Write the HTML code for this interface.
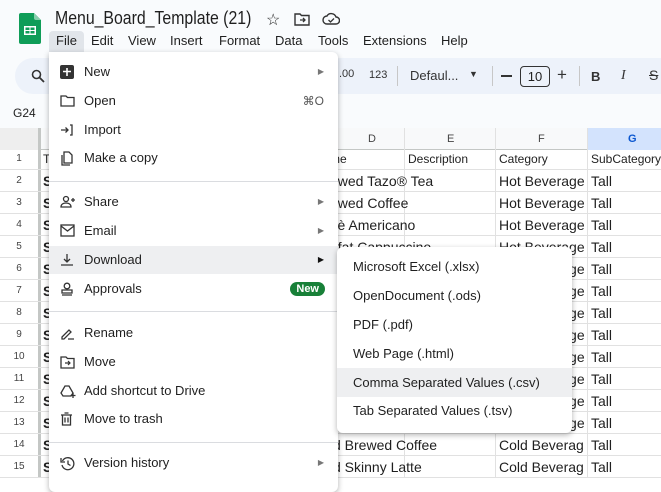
<!DOCTYPE html>
<html><head><meta charset="utf-8"><style>
*{margin:0;padding:0;box-sizing:border-box}
body{width:661px;height:478px;overflow:hidden;background:#fff;font-family:"Liberation Sans",Arial,sans-serif;color:#1f1f1f;position:relative}
.a{position:absolute;white-space:nowrap}
.top{position:absolute;left:0;top:0;width:661px;height:128px;background:#f9fbfd}
.grid div{position:absolute}
.mi{position:absolute;left:0;width:289px;height:28px;font-size:13px;line-height:28px;padding-left:35px;color:#1f1f1f}
.mi svg{position:absolute;left:11px;top:7px}
.arr{position:absolute;right:14px;top:0;font-size:8px;color:#777}
.sep{position:absolute;left:0;width:289px;height:1px;background:#dadce0}
.si{position:absolute;left:0;width:235px;height:29px;font-size:13px;line-height:29px;padding-left:16px;color:#1f1f1f}
</style></head><body>
<div class="top"></div>
<svg class="a" style="left:19px;top:13px" width="22" height="31" viewBox="0 0 22 31"><path d="M2 0h13l7 7v22a2 2 0 0 1-2 2H2a2 2 0 0 1-2-2V2a2 2 0 0 1 2-2z" fill="#0f9d58"/><path d="M15 0l7 7h-5a2 2 0 0 1-2-2z" fill="#87ceac"/><rect x="5" y="13" width="12" height="9" fill="#fff"/><rect x="6.5" y="14.5" width="4" height="2.5" fill="#0f9d58"/><rect x="11.5" y="14.5" width="4" height="2.5" fill="#0f9d58"/><rect x="6.5" y="18" width="4" height="2.5" fill="#0f9d58"/><rect x="11.5" y="18" width="4" height="2.5" fill="#0f9d58"/></svg>
<div class="a" style="left:55px;top:8px;font-size:18px;transform:scaleX(0.88);transform-origin:0 0">Menu_Board_Template (21)</div>
<div class="a" style="left:266px;top:10px;font-size:16px">☆</div>
<svg class="a" style="left:294px;top:12px" width="16" height="14" viewBox="0 0 16 14"><path d="M1 2h5l1.5 1.5H15V13H1z" fill="none" stroke="#333" stroke-width="1.4"/><path d="M6 8h5M9 6l2 2-2 2" fill="none" stroke="#333" stroke-width="1.3"/></svg>
<svg class="a" style="left:322px;top:12px" width="18" height="13" viewBox="0 0 18 13"><path d="M5 12a4 4 0 0 1 0-8 5 5 0 0 1 9 1 3.5 3.5 0 0 1 0 7z" fill="none" stroke="#333" stroke-width="1.4"/><path d="M6.5 8l2 2 3.5-3.5" fill="none" stroke="#333" stroke-width="1.3"/></svg>
<div class="a" style="left:49px;top:31px;width:35px;height:21px;background:#e1e5ea;border-radius:4px 4px 0 0"></div>
<div class="a" style="left:56px;top:33px;font-size:13px">File</div>
<div class="a" style="left:91px;top:33px;font-size:13px">Edit</div>
<div class="a" style="left:128px;top:33px;font-size:13px">View</div>
<div class="a" style="left:170px;top:33px;font-size:13px">Insert</div>
<div class="a" style="left:219px;top:33px;font-size:13px">Format</div>
<div class="a" style="left:275px;top:33px;font-size:13px">Data</div>
<div class="a" style="left:318px;top:33px;font-size:13px">Tools</div>
<div class="a" style="left:363px;top:33px;font-size:13px">Extensions</div>
<div class="a" style="left:441px;top:33px;font-size:13px">Help</div>
<div class="a" style="left:15px;top:58px;width:680px;height:36px;background:#edf2fa;border-radius:18px"></div>
<svg class="a" style="left:31px;top:69px" width="14" height="14" viewBox="0 0 14 14"><circle cx="5.5" cy="5.5" r="4" fill="none" stroke="#333" stroke-width="1.6"/><path d="M8.5 8.5L13 13" stroke="#333" stroke-width="1.8"/></svg>
<div class="a" style="left:339px;top:68px;font-size:11px;color:#333">.00</div>
<div class="a" style="left:369px;top:69px;font-size:11px;color:#333">123</div>
<div class="a" style="left:397px;top:66px;width:1px;height:20px;background:#c7c7c7"></div>
<div class="a" style="left:410px;top:68px;font-size:13px;color:#333">Defaul...</div>
<div class="a" style="left:469px;top:69px;font-size:9px;color:#333">▼</div>
<div class="a" style="left:492px;top:66px;width:1px;height:20px;background:#c7c7c7"></div>
<div class="a" style="left:501px;top:75px;width:11px;height:1.5px;background:#333"></div>
<div class="a" style="left:520px;top:66px;width:30px;height:21px;border:1px solid #333;border-radius:4px;font-size:13px;text-align:center;line-height:19px">10</div>
<div class="a" style="left:557px;top:65px;font-size:17px;color:#333">+</div>
<div class="a" style="left:579px;top:66px;width:1px;height:20px;background:#c7c7c7"></div>
<div class="a" style="left:591px;top:69px;font-size:13px;font-weight:bold;color:#333">B</div>
<div class="a" style="left:621px;top:68px;font-size:14px;font-style:italic;font-family:'Liberation Serif',serif;color:#333">I</div>
<div class="a" style="left:649px;top:67px;font-size:14px;color:#333;text-decoration:line-through">S</div>
<div class="a" style="left:13px;top:106px;font-size:12px">G24</div>
<div class="grid">
<div style="left:0;top:128px;width:661px;height:22px;background:#f8f9fa;border-bottom:1px solid #c4c7c5"></div>
<div style="left:0;top:128px;width:38px;height:22px;background:#eee"></div>
<div style="left:587px;top:128px;width:74px;height:22px;background:#d3e3fd"></div>
<div style="left:38px;top:128px;width:3px;height:350px;background:#c4c7c5"></div>
</div>
<div id="g"></div>
<script>
var h='';var ry=148,RH=22;
var cols=[404,495,587];
for(var c of cols)h+='<div class="a" style="left:'+c+'px;top:128px;width:1px;height:350px;background:#e1e1e1"></div>';
h+='<div class="a" style="left:368px;top:133px;font-size:11px;color:#444">D</div>';
h+='<div class="a" style="left:447px;top:133px;font-size:11px;color:#444">E</div>';
h+='<div class="a" style="left:538px;top:133px;font-size:11px;color:#444">F</div>';
h+='<div class="a" style="left:628px;top:133px;font-size:11px;color:#0b57d0;font-weight:bold">G</div>';
var D=['me','ewed Tazo® Tea','ewed Coffee','ffè Americano','nfat Cappuccino','','','','','','','','','d Brewed Coffee','d Skinny Latte'];
for(var i=0;i<15;i++){var y=ry+i*RH;
h+='<div class="a" style="left:0;top:'+(y+RH-1)+'px;width:661px;height:1px;background:#e1e1e1"></div>';
h+='<div class="a" style="left:0;top:'+y+'px;width:38px;text-align:center;font-size:10px;line-height:'+RH+'px;color:#444">'+(i+1)+'</div>';
var big=i>0, fs=big?'14px':'12px';
h+='<div class="a" style="left:43px;top:'+y+'px;font-size:'+fs+';line-height:'+RH+'px;'+(big?'font-weight:bold':'')+'">'+(i==0?'T':'S')+'</div>';
h+='<div class="a" style="left:'+(i>=13?333:330)+'px;top:'+y+'px;font-size:'+fs+';line-height:'+RH+'px">'+D[i]+'</div>';
if(i==0){h+='<div class="a" style="left:408px;top:'+y+'px;font-size:12px;line-height:'+RH+'px">Description</div>';}
var cat=i==0?'Category':(i<13?'Hot Beverage':'Cold Beverag');
h+='<div class="a" style="left:499px;top:'+y+'px;width:87px;overflow:hidden;font-size:'+fs+';line-height:'+RH+'px">'+cat+'</div>';
h+='<div class="a" style="left:591px;top:'+y+'px;font-size:'+fs+';line-height:'+RH+'px">'+(i==0?'SubCategory':'Tall')+'</div>';
}
document.getElementById('g').innerHTML=h;
</script>
<div class="a" style="left:49px;top:52px;width:289px;height:440px;background:#fff;border-radius:0 6px 6px 6px;box-shadow:0 2px 6px rgba(0,0,0,.3)">
<div class="mi" style="top:6px"><svg width="14" height="14" viewBox="0 0 14 14"><rect width="14" height="14" rx="2" fill="#333"/><path d="M7 3v8M3 6.5h8" stroke="#fff" stroke-width="1.6"/></svg>New<span class="arr">▶</span></div>
<div class="mi" style="top:35px"><svg width="15" height="14" viewBox="0 0 15 14"><path d="M1 2h5l1.5 1.5H14V12H1z" fill="none" stroke="#333" stroke-width="1.3"/></svg>Open<span class="arr" style="font-size:12px;color:#555">⌘O</span></div>
<div class="mi" style="top:64px"><svg width="14" height="14" viewBox="0 0 14 14"><path d="M1 7h7M5.5 4.5L8 7l-2.5 2.5M10 2h2v10h-2" fill="none" stroke="#333" stroke-width="1.3"/></svg>Import</div>
<div class="mi" style="top:92px"><svg width="14" height="15" viewBox="0 0 14 15"><path d="M4 1h5l3 3v8H4z M2 4v10h8" fill="none" stroke="#333" stroke-width="1.3"/></svg>Make a copy</div>
<div class="sep" style="top:129px"></div>
<div class="mi" style="top:136px"><svg width="16" height="14" viewBox="0 0 16 14"><circle cx="6" cy="4" r="2.5" fill="none" stroke="#333" stroke-width="1.3"/><path d="M1 12c0-3 2.5-4 5-4s5 1 5 4z M13 3v4M11 5h4" fill="none" stroke="#333" stroke-width="1.3"/></svg>Share<span class="arr">▶</span></div>
<div class="mi" style="top:165px"><svg width="15" height="13" viewBox="0 0 15 13"><rect x="1" y="1" width="13" height="11" fill="none" stroke="#333" stroke-width="1.3"/><path d="M1 2l6.5 5L14 2" fill="none" stroke="#333" stroke-width="1.3"/></svg>Email<span class="arr">▶</span></div>
<div class="mi" style="top:194px;background:#eeeff1"><svg width="14" height="14" viewBox="0 0 14 14"><path d="M7 1v8M4 6l3 3 3-3M1 12h12" fill="none" stroke="#333" stroke-width="1.3"/></svg>Download<span class="arr" style="color:#111">▶</span></div>
<div class="mi" style="top:223px"><svg width="14" height="15" viewBox="0 0 14 15"><circle cx="7" cy="4" r="2.8" fill="none" stroke="#333" stroke-width="1.3"/><path d="M2 8h10v3H2z M2 13h10" fill="none" stroke="#333" stroke-width="1.3"/></svg>Approvals<span style="position:absolute;right:13px;top:7px;background:#188038;color:#fff;font-size:11px;font-weight:bold;line-height:14px;padding:0 6px;border-radius:8px">New</span></div>
<div class="sep" style="top:259px"></div>
<div class="mi" style="top:267px"><svg width="15" height="14" viewBox="0 0 15 14"><path d="M2 11L9 4l2 2-7 7H2zM8 13h6" fill="none" stroke="#333" stroke-width="1.3"/></svg>Rename</div>
<div class="mi" style="top:296px"><svg width="15" height="14" viewBox="0 0 15 14"><path d="M1 2h5l1.5 1.5H14V13H1z" fill="none" stroke="#333" stroke-width="1.3"/><path d="M5 8h5M8 6l2 2-2 2" fill="none" stroke="#333" stroke-width="1.2"/></svg>Move</div>
<div class="mi" style="top:325px"><svg width="16" height="15" viewBox="0 0 16 15"><path d="M5 2h4l4 7-2 3H3L1 9z" fill="none" stroke="#333" stroke-width="1.3"/><path d="M13 9v5M10.5 11.5h5" stroke="#333" stroke-width="1.3"/></svg>Add shortcut to Drive</div>
<div class="mi" style="top:353px"><svg width="13" height="14" viewBox="0 0 13 14"><path d="M1 3h11M4.5 1h4M2.5 3v10h8V3M5 5.5v5M8 5.5v5" fill="none" stroke="#333" stroke-width="1.3"/></svg>Move to trash</div>
<div class="sep" style="top:390px"></div>
<div class="mi" style="top:397px"><svg width="15" height="15" viewBox="0 0 15 15"><path d="M2.5 5A6 6 0 1 1 2 9" fill="none" stroke="#333" stroke-width="1.3"/><path d="M1 2v4h4M8 4.5V8l2.5 1.5" fill="none" stroke="#333" stroke-width="1.3"/></svg>Version history<span class="arr">▶</span></div>
</div>
<div class="a" style="left:337px;top:247px;width:235px;height:186px;background:#fff;border-radius:6px;box-shadow:0 2px 6px rgba(0,0,0,.3)">
<div class="si" style="top:5px">Microsoft Excel (.xlsx)</div>
<div class="si" style="top:34px">OpenDocument (.ods)</div>
<div class="si" style="top:63px">PDF (.pdf)</div>
<div class="si" style="top:92px">Web Page (.html)</div>
<div class="si" style="top:121px;background:#eeeff1">Comma Separated Values (.csv)</div>
<div class="si" style="top:149px">Tab Separated Values (.tsv)</div>
</div>
</body></html>
